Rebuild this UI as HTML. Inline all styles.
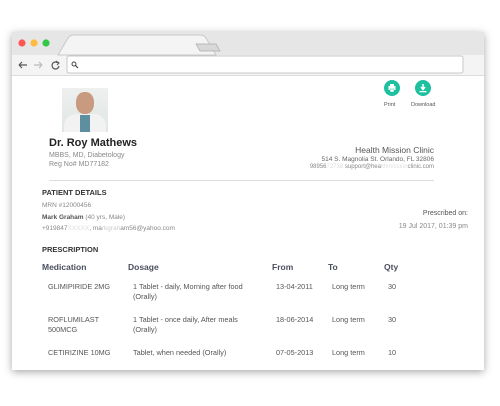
<!DOCTYPE html><html><head><style>
body{margin:0;width:500px;height:406px;background:#fff;font-family:"Liberation Sans",sans-serif;position:relative;overflow:hidden}
.a{position:absolute;white-space:nowrap}
.win{position:absolute;left:12px;top:32px;width:472px;height:338px;background:#fff;box-shadow:0 2px 8px rgba(0,0,0,.35)}
.g{color:#888;font-size:7px}
.h{color:#4a4f5e;font-size:8.5px;font-weight:bold}
.r{color:#555;font-size:7.3px}
</style></head><body>
<div class="win"></div>
<div class="a" style="left:12px;top:32px;width:472px;height:23px;background:#e6e6e6"></div>
<div class="a" style="left:12px;top:55px;width:472px;height:20px;background:#f4f4f4;border-bottom:1px solid #ddd"></div>
<svg class="a" style="left:12px;top:32px" width="472" height="44">
<path d="M46 23 L56 6 Q58 3 62 3 L188 3 Q192 3 194 6 L204 23 Z" fill="#f4f4f4" stroke="#c8c8c8"/>
<path d="M184 12 L204 12 L208 19 L188 19 Z" fill="#d8d8d8" stroke="#aaa" stroke-width=".7"/>
<circle cx="10" cy="11" r="3.6" fill="#fc5753"/><circle cx="22" cy="11" r="3.6" fill="#fdbc40"/><circle cx="34" cy="11" r="3.6" fill="#33c748"/>
<path d="M7 33 L15 33 M7 33 L10 30 M7 33 L10 36" stroke="#555" stroke-width="1.2" fill="none"/>
<path d="M22 33 L30 33 M30 33 L27 30 M30 33 L27 36" stroke="#bbb" stroke-width="1.2" fill="none"/>
<path d="M46 31 A3.5 3.5 0 1 0 47 34" stroke="#555" stroke-width="1.2" fill="none"/><path d="M44 29 L47 31 L45 33" stroke="#555" stroke-width="1" fill="none"/>
<rect x="55" y="24" width="396" height="17" rx="2" fill="#fff" stroke="#c8c8c8"/>
<circle cx="62" cy="32" r="2" stroke="#444" fill="none"/><path d="M63.5 33.5 L66 36" stroke="#444" stroke-width="1.2"/>
</svg>
<div class="a" style="left:62px;top:88px;width:46px;height:44px;background:linear-gradient(#eef0ef,#dfe6e3)"></div>
<div class="a" style="left:76px;top:92px;width:18px;height:22px;border-radius:45%;background:#c89a80"></div>
<div class="a" style="left:64px;top:114px;width:42px;height:18px;border-radius:12px 12px 0 0;background:#f2f2f2"></div>
<div class="a" style="left:80px;top:115px;width:10px;height:17px;background:#5d8fa0"></div>
<div class="a" style="left:49px;top:137px;font-size:11px;font-weight:bold;color:#222">Dr. Roy Mathews</div>
<div class="a g" style="left:49px;top:152px">MBBS, MD, Diabetology</div>
<div class="a g" style="left:49px;top:161px">Reg No# MD77182</div>
<div class="a" style="left:384px;top:80px;width:16px;height:16px;border-radius:50%;background:#1ec0a0"></div>
<div class="a" style="left:415px;top:80px;width:16px;height:16px;border-radius:50%;background:#1ec0a0"></div>
<svg class="a" style="left:384px;top:80px" width="48" height="16"><rect x="4.5" y="6" width="7" height="4" fill="#fff"/><rect x="6" y="4" width="4" height="2" fill="#fff"/><rect x="6" y="9" width="4" height="3" fill="#fff" stroke="#1ec0a0" stroke-width=".5"/>
<path d="M39 4 L39 9 M37 7 L39 9.5 L41 7" stroke="#fff" stroke-width="1.5" fill="none"/><rect x="35.5" y="11" width="7" height="1.3" fill="#fff"/></svg>
<div class="a" style="left:384px;top:102px;font-size:5.5px;color:#555">Print</div>
<div class="a" style="left:411px;top:102px;font-size:5.5px;color:#555">Download</div>
<div class="a" style="right:66px;top:145px;font-size:8.5px;color:#555">Health Mission Clinic</div>
<div class="a" style="right:66px;top:156px;font-size:6.5px;color:#666">514 S. Magnolia St. Orlando, FL 32806</div>
<div class="a" style="right:66px;top:164px;font-size:6px;color:#888">98956<span style="color:#ddd">72738</span> support@hea<span style="color:#ddd">lthmission</span>clinic.com</div>
<div class="a" style="left:49px;top:180px;width:385px;height:1px;background:#ddd"></div>
<div class="a h" style="left:42px;top:188px;font-size:7.5px;color:#333">PATIENT DETAILS</div>
<div class="a g" style="left:42px;top:202px;font-size:6.5px">MRN #12000456</div>
<div class="a g" style="left:42px;top:214px;font-size:6.5px"><b style="color:#555">Mark Graham</b> (40 yrs, Male)</div>
<div class="a g" style="left:42px;top:225px;font-size:6.5px">+919847<span style="color:#ddd">XXXXX</span>, ma<span style="color:#ccc">rkgrah</span>am56@yahoo.com</div>
<div class="a" style="right:32px;top:210px;font-size:7px;color:#555">Prescribed on:</div>
<div class="a" style="right:32px;top:223px;font-size:7px;color:#888">19 Jul 2017, 01:39 pm</div>
<div class="a h" style="left:42px;top:245px;font-size:7.5px;color:#333">PRESCRIPTION</div>
<div class="a h" style="left:42px;top:262px">Medication</div>
<div class="a h" style="left:128px;top:262px">Dosage</div>
<div class="a h" style="left:272px;top:262px">From</div>
<div class="a h" style="left:328px;top:262px">To</div>
<div class="a h" style="left:384px;top:262px">Qty</div>
<div class="a r" style="left:48px;top:282px">GLIMIPIRIDE 2MG</div>
<div class="a r" style="left:133px;top:282px;line-height:10px">1 Tablet - daily, Morning after food<br>(Orally)</div>
<div class="a r" style="left:276px;top:282px">13-04-2011</div>
<div class="a r" style="left:332px;top:282px">Long term</div>
<div class="a r" style="left:388px;top:282px">30</div>
<div class="a r" style="left:48px;top:315px;line-height:10px">ROFLUMILAST<br>500MCG</div>
<div class="a r" style="left:133px;top:315px;line-height:10px">1 Tablet - once daily, After meals<br>(Orally)</div>
<div class="a r" style="left:276px;top:315px">18-06-2014</div>
<div class="a r" style="left:332px;top:315px">Long term</div>
<div class="a r" style="left:388px;top:315px">30</div>
<div class="a r" style="left:48px;top:348px">CETIRIZINE 10MG</div>
<div class="a r" style="left:133px;top:348px">Tablet, when needed (Orally)</div>
<div class="a r" style="left:276px;top:348px">07-05-2013</div>
<div class="a r" style="left:332px;top:348px">Long term</div>
<div class="a r" style="left:388px;top:348px">10</div>
</body></html>
